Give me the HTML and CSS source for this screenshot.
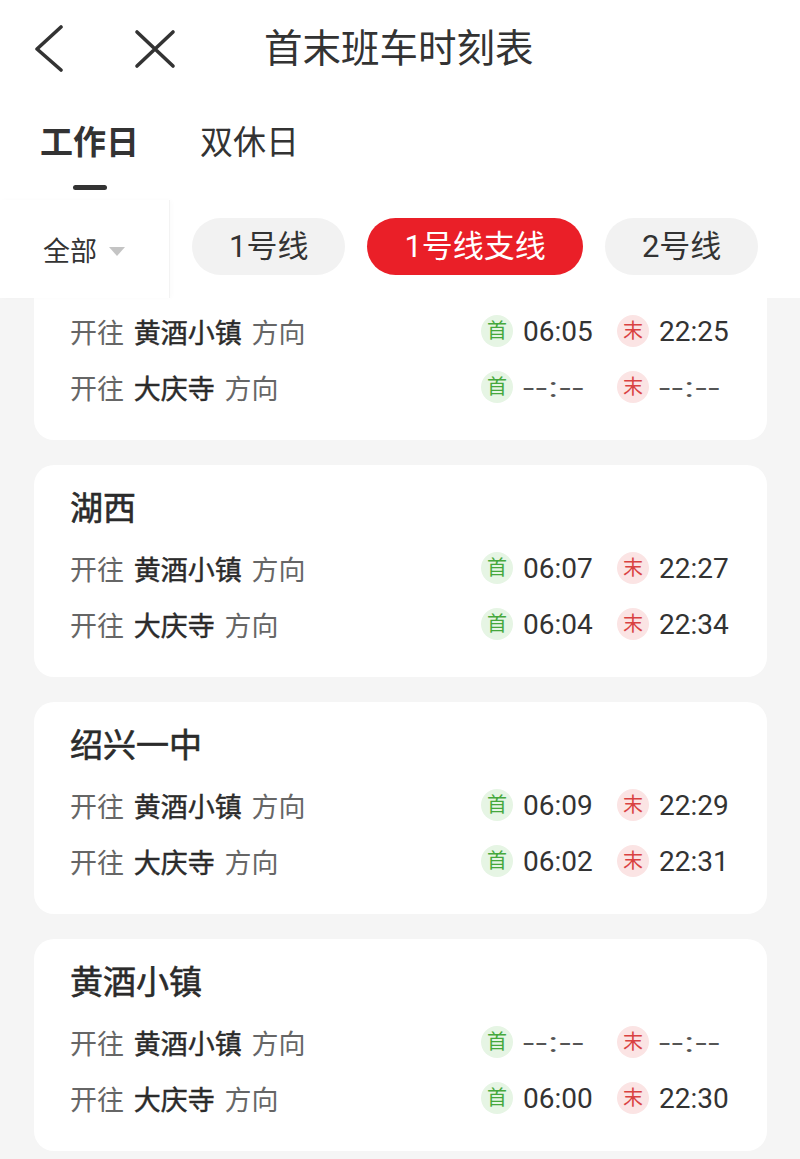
FILE: index.html
```html
<!DOCTYPE html>
<html lang="zh-CN">
<head>
    <meta charset="UTF-8">
    <meta name="viewport" content="width=device-width, initial-scale=1.0">
    <title>首末班车时刻表</title>
    <link rel="stylesheet" href="styles.css">
</head>
<body>
    <header class="nav">
        <svg class="nav-back" width="30" height="48" viewBox="0 0 30 48">
            <path d="M27 2 L3 24 L27 45" fill="none" stroke="#333" stroke-width="3.6" stroke-linecap="round" stroke-linejoin="round"/>
        </svg>
        <svg class="nav-close" width="42" height="42" viewBox="0 0 42 42">
            <path d="M3 4 L39 38 M39 4 L3 38" fill="none" stroke="#333" stroke-width="3.6" stroke-linecap="round"/>
        </svg>
        <h1 class="nav-title">首末班车时刻表</h1>
    </header>

    <div class="day-tabs">
        <div class="day-tab active">工作日<span class="tab-bar"></span></div>
        <div class="day-tab">双休日</div>
    </div>

    <div class="filter">
        <div class="filter-all">全部<span class="caret"></span></div>
        <div class="line-pills">
            <span class="pill">1号线</span>
            <span class="pill active">1号线支线</span>
            <span class="pill">2号线</span>
        </div>
    </div>

    <main class="list">
        <!-- first card is scrolled up under the filter bar -->
        <section class="card cont">
            <div class="row">
                <div class="dir">开往 <b>黄酒小镇</b> 方向</div>
                <div class="t"><span class="badge first">首</span>06:05</div>
                <div class="t"><span class="badge last">末</span>22:25</div>
            </div>
            <div class="row">
                <div class="dir">开往 <b>大庆寺</b> 方向</div>
                <div class="t"><span class="badge first">首</span><span class="dash">--:--</span></div>
                <div class="t"><span class="badge last">末</span><span class="dash">--:--</span></div>
            </div>
        </section>

        <section class="card">
            <h2 class="station">湖西</h2>
            <div class="row">
                <div class="dir">开往 <b>黄酒小镇</b> 方向</div>
                <div class="t"><span class="badge first">首</span>06:07</div>
                <div class="t"><span class="badge last">末</span>22:27</div>
            </div>
            <div class="row">
                <div class="dir">开往 <b>大庆寺</b> 方向</div>
                <div class="t"><span class="badge first">首</span>06:04</div>
                <div class="t"><span class="badge last">末</span>22:34</div>
            </div>
        </section>

        <section class="card">
            <h2 class="station">绍兴一中</h2>
            <div class="row">
                <div class="dir">开往 <b>黄酒小镇</b> 方向</div>
                <div class="t"><span class="badge first">首</span>06:09</div>
                <div class="t"><span class="badge last">末</span>22:29</div>
            </div>
            <div class="row">
                <div class="dir">开往 <b>大庆寺</b> 方向</div>
                <div class="t"><span class="badge first">首</span>06:02</div>
                <div class="t"><span class="badge last">末</span>22:31</div>
            </div>
        </section>

        <section class="card">
            <h2 class="station">黄酒小镇</h2>
            <div class="row">
                <div class="dir">开往 <b>黄酒小镇</b> 方向</div>
                <div class="t"><span class="badge first">首</span><span class="dash">--:--</span></div>
                <div class="t"><span class="badge last">末</span><span class="dash">--:--</span></div>
            </div>
            <div class="row">
                <div class="dir">开往 <b>大庆寺</b> 方向</div>
                <div class="t"><span class="badge first">首</span>06:00</div>
                <div class="t"><span class="badge last">末</span>22:30</div>
            </div>
        </section>
    </main>
</body>
</html>
```

FILE: styles.css
```css
html, body {
    height: 100%;
    overflow: hidden;
}
body {
    margin: 0;
    font-family: Roboto, "Noto Sans CJK SC", sans-serif;
    color: #333;
    background-color: #f5f5f5;
}

.nav {
    display: flex;
    align-items: center;
    height: 96px;
    padding: 2px 0 0 34px;
    box-sizing: border-box;
    background-color: #fff;
}
.nav-close {
    margin-left: 70px;
}
.nav-title {
    margin: 0 0 0 88px;
    font-size: 38.5px;
    font-weight: 400;
    line-height: 1;
}

.day-tabs {
    display: flex;
    gap: 61px;
    height: 104px;
    padding: 24px 0 0 40px;
    box-sizing: border-box;
    background-color: #fff;
}
.day-tab {
    display: flex;
    flex-direction: column;
    align-items: center;
    font-size: 33px;
    line-height: 46px;
}
.day-tab.active {
    font-weight: 700;
}
.tab-bar {
    width: 34px;
    height: 5px;
    margin-top: 19px;
    border-radius: 3px;
    background-color: #333;
}

.filter {
    display: flex;
    align-items: center;
    height: 98px;
    background-color: #fff;
}
.filter-all {
    display: flex;
    align-items: center;
    width: 170px;
    height: 100%;
    padding-left: 43px;
    box-sizing: border-box;
    font-size: 27px;
    border-right: 1px solid #f3f3f3;
    box-shadow: 2px 0 4px rgba(0, 0, 0, 0.02);
}
.caret {
    width: 0;
    height: 0;
    margin-left: 12px;
    margin-top: 4px;
    border-left: 8px solid transparent;
    border-right: 8px solid transparent;
    border-top: 9px solid #c4c4c4;
}
.line-pills {
    display: flex;
    gap: 22px;
    padding: 0 0 6px 22px;
}
.pill {
    height: 57px;
    padding: 0 37px;
    border-radius: 29px;
    font-size: 31px;
    line-height: 57px;
    background-color: #f2f2f2;
    color: #333;
}
.pill.active {
    background-color: #ea1f28;
    color: #fff;
}

.list {
    height: calc(100% - 298px);
    overflow: hidden;
    padding: 0 33px 0 34px;
}
.card {
    padding: 22px 14px 25px 36px;
    margin-bottom: 25px;
    border-radius: 20px;
    background-color: #fff;
}
.card.cont {
    padding-top: 5px;
    border-radius: 0 0 20px 20px;
}
.station {
    margin: 0 0 9px;
    font-size: 33px;
    font-weight: 400;
    line-height: 44px;
    color: #2b2b2b;
    -webkit-text-stroke: 0.6px #2b2b2b;
}
.row {
    display: flex;
    align-items: center;
    height: 56px;
}
.dir {
    flex: 1;
    font-size: 27px;
    word-spacing: 3px;
    color: #666;
}
.dir b {
    font-weight: 400;
    color: #2b2b2b;
    -webkit-text-stroke: 0.45px #2b2b2b;
}
.t {
    display: flex;
    align-items: center;
    gap: 10px;
    width: 136px;
    font-size: 28px;
    color: #333;
}
.dash {
    display: inline-block;
    color: #555;
    letter-spacing: 1px;
    transform: scaleX(1.45);
    transform-origin: left center;
}
.badge {
    width: 32px;
    height: 32px;
    border-radius: 50%;
    font-size: 20px;
    line-height: 32px;
    text-align: center;
}
.badge.first {
    background-color: #e6f5e4;
    color: #45a83c;
}
.badge.last {
    background-color: #fbe4e4;
    color: #d94141;
}
```
